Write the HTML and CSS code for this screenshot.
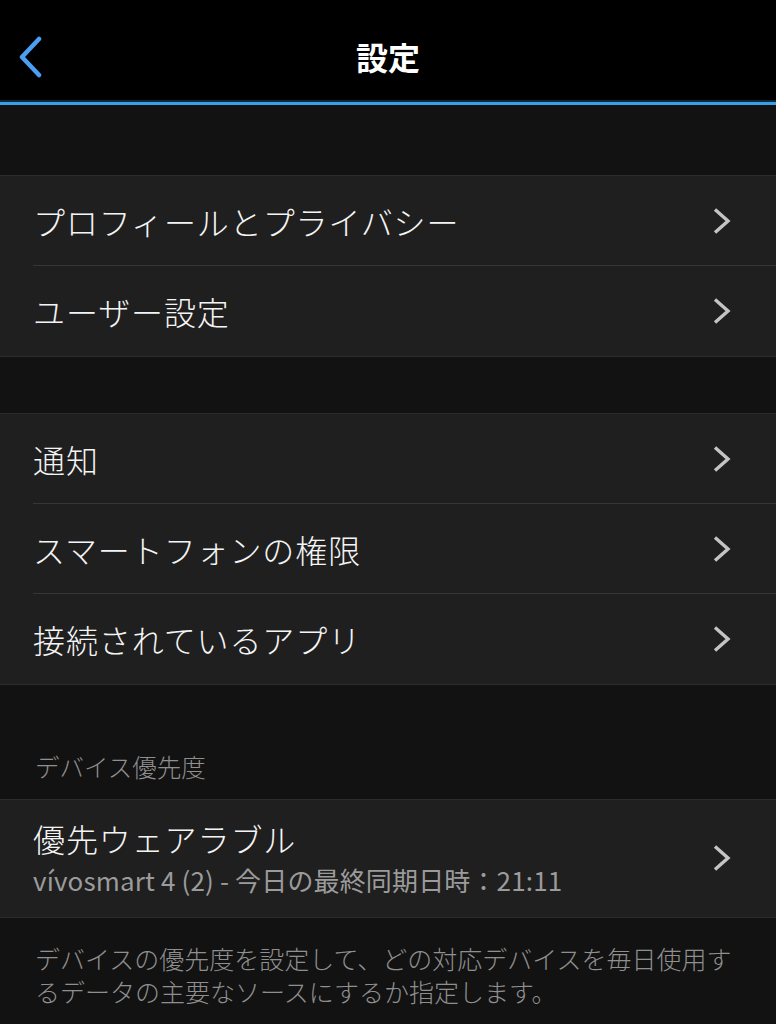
FILE: index.html
```html
<!DOCTYPE html>
<html lang="ja">
  <head>
    <meta charset="UTF-8" />
    <meta name="viewport" content="width=device-width, initial-scale=1.0" />
    <title>設定</title>
    <link rel="stylesheet" href="styles.css">
  </head>
  <body>
    <!-- Top navigation bar -->
    <header class="nav-bar">
      <a class="back" href="#" aria-label="戻る">
        <svg width="26" height="42" viewBox="0 0 26 42">
          <polyline points="22,3 5,21 22,39" fill="none" stroke="#4a9ff2" stroke-width="4.5" stroke-linecap="round" stroke-linejoin="round" />
        </svg>
      </a>
      <h1 class="nav-title">設定</h1>
    </header>

    <div class="spacer spacer-top"></div>

    <!-- Group: profile / user -->
    <section class="group">
      <a class="row" href="#">
        <div class="row-inner">
          <span class="row-label">プロフィールとプライバシー</span>
          <span class="chevron"><svg width="18" height="26" viewBox="0 0 18 26"><polyline points="2,1.5 15,13 2,24.5" fill="none" stroke="#c4c4c4" stroke-width="3.4" /></svg></span>
        </div>
      </a>
      <a class="row" href="#">
        <div class="row-inner">
          <span class="row-label">ユーザー設定</span>
          <span class="chevron"><svg width="18" height="26" viewBox="0 0 18 26"><polyline points="2,1.5 15,13 2,24.5" fill="none" stroke="#c4c4c4" stroke-width="3.4" /></svg></span>
        </div>
      </a>
    </section>

    <div class="spacer spacer-mid"></div>

    <!-- Group: notifications / permissions / apps -->
    <section class="group">
      <a class="row" href="#">
        <div class="row-inner">
          <span class="row-label">通知</span>
          <span class="chevron"><svg width="18" height="26" viewBox="0 0 18 26"><polyline points="2,1.5 15,13 2,24.5" fill="none" stroke="#c4c4c4" stroke-width="3.4" /></svg></span>
        </div>
      </a>
      <a class="row" href="#">
        <div class="row-inner">
          <span class="row-label">スマートフォンの権限</span>
          <span class="chevron"><svg width="18" height="26" viewBox="0 0 18 26"><polyline points="2,1.5 15,13 2,24.5" fill="none" stroke="#c4c4c4" stroke-width="3.4" /></svg></span>
        </div>
      </a>
      <a class="row" href="#">
        <div class="row-inner">
          <span class="row-label">接続されているアプリ</span>
          <span class="chevron"><svg width="18" height="26" viewBox="0 0 18 26"><polyline points="2,1.5 15,13 2,24.5" fill="none" stroke="#c4c4c4" stroke-width="3.4" /></svg></span>
        </div>
      </a>
    </section>

    <!-- Device priority -->
    <div class="section-header">デバイス優先度</div>
    <section class="group">
      <a class="row" href="#">
        <div class="row-inner row-tall">
          <div class="row-text">
            <span class="row-label">優先ウェアラブル</span>
            <span class="row-sub">vívosmart 4 (2) - 今日の最終同期日時：21:11</span>
          </div>
          <span class="chevron"><svg width="18" height="26" viewBox="0 0 18 26"><polyline points="2,1.5 15,13 2,24.5" fill="none" stroke="#c4c4c4" stroke-width="3.4" /></svg></span>
        </div>
      </a>
    </section>

    <p class="footer-note">デバイスの優先度を設定して、どの対応デバイスを毎日使用するデータの主要なソースにするか指定します。</p>
  </body>
</html>
```

FILE: styles.css
```css
/* Page */
body {
  margin: 0;
  background: #121212;
  color: #f4f4f4;
  font-family: "Noto Sans CJK JP", "Noto Sans", sans-serif;
}

a {
  color: inherit;
  text-decoration: none;
}

/* Navigation bar */
.nav-bar {
  height: 100px;
  background: #000;
  display: flex;
  align-items: center;
  justify-content: center;
  position: relative;
  border-bottom: 2px solid #0b2940;
  box-shadow: 0 3px 0 #3a9fe6;
  margin-bottom: 3px;
}

.back {
  position: absolute;
  left: 17px;
  top: 36px;
  display: flex;
}

.nav-title {
  margin: 0;
  font-size: 32px;
  font-weight: 700;
  color: #fff;
  line-height: 1;
  margin-top: 12px;
}

/* Spacers between groups */
.spacer-top {
  height: 70px;
}

.spacer-mid {
  height: 56px;
}

/* Grouped list */
.group {
  background: #1f1f1f;
  border-top: 1px solid #2c2c2c;
  border-bottom: 1px solid #2c2c2c;
}

.row {
  display: block;
  padding-left: 33px;
}

.row-inner {
  height: 89px;
  display: flex;
  align-items: center;
  justify-content: space-between;
  padding-right: 45px;
  border-bottom: 1px solid #363636;
}

.row:last-child .row-inner {
  border-bottom: none;
  height: 90px;
}

.row-label {
  font-size: 32px;
  line-height: 40px;
  letter-spacing: 0.9px;
  font-weight: 300;
}

.chevron {
  display: flex;
}

/* Two-line row */
.row:last-child .row-tall {
  height: auto;
  padding-top: 18px;
  padding-bottom: 20px;
}

.row-text {
  display: flex;
  flex-direction: column;
}

.row-sub {
  font-size: 26px;
  line-height: 34px;
  margin-top: 5px;
  letter-spacing: 0.15px;
  color: #9b9b9b;
}

/* Section header */
.section-header {
  padding: 66px 35px 16px;
  font-size: 24.5px;
  line-height: 32px;
  font-weight: 300;
  color: #8f8f8f;
}

/* Footer explanation */
.footer-note {
  margin: 0;
  padding: 24px 35px 20px;
  font-size: 25px;
  line-height: 33px;
  font-weight: 300;
  color: #8f8f8f;
}
```
